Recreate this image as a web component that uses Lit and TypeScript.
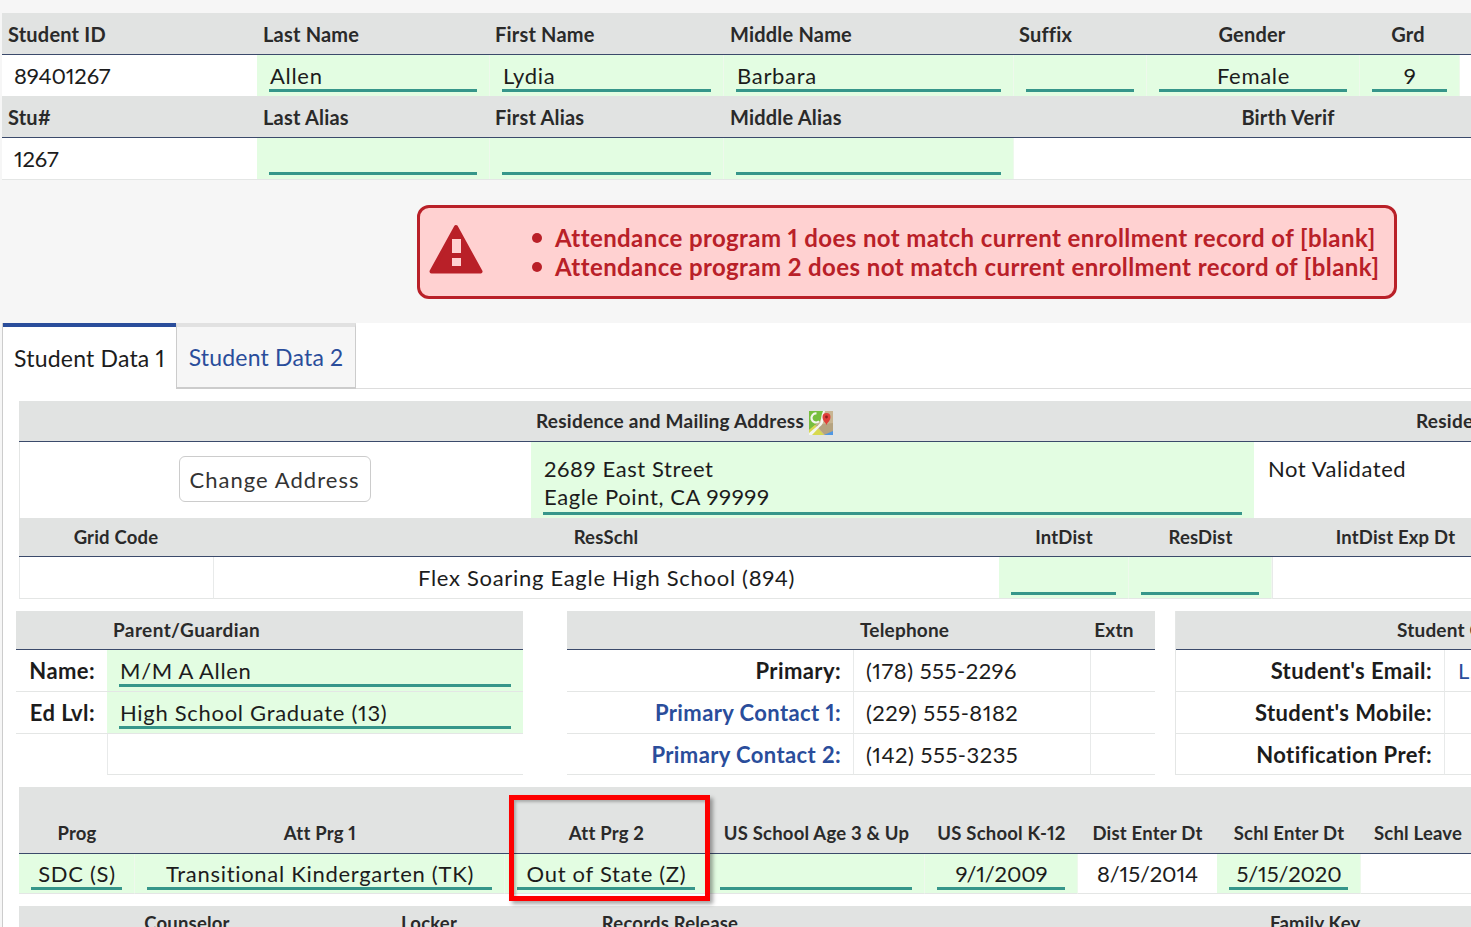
import { LitElement, html, css, svg } from "lit";
import { customElement } from "lit/decorators.js";

@customElement("app-root")
export class AppRoot extends LitElement {
  static styles = css`
    :host { display: block; }
    * { box-sizing: border-box; }
    .page { position: relative; width: 1471px; height: 927px; overflow: hidden; background: #f6f6f6; padding-top: 13px; font-family: Lato, "Noto Sans", sans-serif; font-variant-numeric: proportional-nums; color: #1c1c1c; display: flex; flex-direction: column; }

    .row { display: grid; }
    .top { margin-left: 2px; width: 1469px; background: #fff; }
    .top .row { grid-template-columns: 255px 233px 234px 290px 133px 213px 100px 11px; }
    .top .row.wide { grid-template-columns: 255px 233px 234px 290px 457px; }
    .top .row.head { grid-template-columns: 255px 232px 235px 289px 134px 210px 102px 12px; }
    .top .row.head2 { grid-template-columns: 255px 232px 235px 290px 457px; }

    .th { display: flex; align-items: center; background: #e1e3e2; border-bottom: 1px solid #3b4a6b; font-size: 20px; font-weight: 700; letter-spacing: .2px; color: #2a2a2a; white-space: nowrap; }
    .th.l { padding-left: 6px; }
    .th.c { justify-content: center; }
    .h42 { height: 42px; }
    .bv { padding-left: 91px; }

    .td { display: flex; align-items: center; font-size: 22px; letter-spacing: .7px; white-space: nowrap; background: #fff; }
    .td.pad { padding-left: 12px; letter-spacing: .5px; }
    .td.c { justify-content: center; }
    .td.num { letter-spacing: -.15px; }
    .green { background: #e3fde2; border-right: 1px solid #eef9ec; align-items: flex-end; padding: 0 12px 4px; }
    .field { width: 100%; border-bottom: 3px solid #36968a; height: 28px; line-height: 24px; padding-left: 1px; }
    .field.c { text-align: center; }
    .r41 { height: 41px; }
    .r42 { height: 42px; }
    .bb { border-bottom: 1px solid #e4e6e5; }
    .cell { display: grid; }

    .alert { margin: 25px 0 24px 417px; width: 980px; height: 94px; flex: none; display: flex; align-items: center; background: #ffd1d1; border: 3px solid #b92028; border-radius: 12px; color: #b92028; }
    .alert svg { width: 54px; height: 50px; margin: -6px 0 0 9px; flex: none; }
    .alert ul { margin: 0; padding: 0 0 0 67px; list-style: none; font-size: 24px; font-weight: 700; line-height: 29px; letter-spacing: .41px; white-space: nowrap; }
    .alert li { display: flex; align-items: center; }
    .dot { width: 10px; height: 10px; border-radius: 50%; background: #b92028; margin-right: 13px; margin-left: -18px; flex: none; }

    .panel { flex: 1; margin-left: 2px; background: #fff; border-left: 1px solid #ccc; min-height: 0; }
    .tabs { display: flex; height: 66px; border-bottom: 1px solid #ddd; font-size: 23px; letter-spacing: .2px; }
    .tab { display: flex; align-items: center; justify-content: center; white-space: nowrap; }
    .tab.on { width: 173px; border-top: 4px solid #2a4d9b; background: #fff; margin-bottom: -1px; }
    .tab.off { width: 180px; background: #f6f6f6; color: #2a4d9b; border-top: 4px solid #e1e1e1; border-left: 1px solid #ccc; border-right: 1px solid #ccc; border-bottom: 2px solid #ccc; height: 66px; }

    .wide-t { margin: 12px 0 0 16px; width: 1500px; }
    .addr-h { grid-template-columns: 1331px 169px; }
    .addr-h .th { font-size: 19px; height: 41px; letter-spacing: .25px; padding-bottom: 1px; }
    .addr-h .th:last-child { padding-left: 66px; }
    .map { width: 24px; height: 24px; margin: 4px 0 0 5px; flex: none; }
    .addr-d { grid-template-columns: 512px 723px 265px; height: 76px; }
    .addr-d > div { border-bottom: 1px solid #e4e6e5; }
    .btncell { display: flex; align-items: center; justify-content: center; padding: 0 2px 2px 0; border-left: 1px solid #e4e6e5; }
    .btn { width: 192px; height: 46px; border: 1px solid #ccc; border-radius: 6px; background: #fff; font: inherit; font-size: 22px; letter-spacing: 1.05px; color: #333; padding: 0; }
    .addr-g { background: #e3fde2; padding: 13px 12px 3px; font-size: 22px; letter-spacing: .6px; white-space: nowrap; }
    .addr-g .inner { border-bottom: 3px solid #36968a; line-height: 28px; height: 60px; padding-left: 1px; }
    .nv { font-size: 22px; letter-spacing: .55px; padding: 13px 0 0 14px; }

    .grid-h { grid-template-columns: 194px 786px 130px 143px 247px; }
    .grid-h .th { font-size: 18.5px; height: 39px; }
    .grid-d { grid-template-columns: 194px 786px 130px 143px 247px; }
    .grid-d .td { height: 42px; border-bottom: 1px solid #e4e6e5; border-left: 1px solid #e8eaea; }
    .grid-d .green { border-left: 0; padding: 0 12px 3px; }

    .trio { display: flex; margin: 12px 0 0 13px; width: 1500px; }
    .t1 { width: 507px; flex: none; }
    .t2 { width: 588px; flex: none; margin-left: 44px; }
    .t3 { width: 400px; flex: none; margin-left: 20px; border-left: 1px solid #e4e6e5; }
    .hd { display: flex; }
    .hd .th { height: 39px; font-size: 19px; width: 100%; padding-bottom: 1px; }
    .t1 .hd .th { padding-left: 97px; letter-spacing: .4px; }
    .t2 .hd .th { padding-left: 293px; }
    .t2 .hd .th span + span { margin-left: 145px; }
    .t3 .hd .th { padding-left: 221px; }
    .p-row { display: grid; height: 42px; }
    .p-row.short { height: 41px; }
    .t1 .p-row { grid-template-columns: 91px 416px; }
    .t2 .p-row { grid-template-columns: 286px 237px 65px; border-right: 1px solid #e4e6e5; }
    .t3 .p-row { grid-template-columns: 268px 132px; }
    .lbl { display: flex; align-items: center; justify-content: flex-end; padding-right: 12px; font-size: 22px; font-weight: 700; letter-spacing: .4px; white-space: nowrap; border-bottom: 1px solid #e4e6e5; }
    .lbl.blue { color: #2a4d9b; }
    .p-row .td { border-bottom: 1px solid #e4e6e5; border-left: 1px solid #e8eaea; height: auto; }
    .p-row .td.green { border-left: 0; border-right: 0; }
    .link { color: #2a4d9b; padding-left: 13px; }

    .bot { margin: 12px 0 0 16px; width: 1500px; }
    .bot-g { grid-template-columns: 116px 370px 203px 217px 153px 139px 144px 158px; }
    .bot-g .th { height: 67px; font-size: 18.5px; align-items: flex-end; padding-bottom: 9px; }
    .bot-g .td { height: 40px; border-bottom: 1px solid #e4e6e5; }
    .bot-g .green { padding: 0 12px 3px; }
    .plain { justify-content: center; }
    .sl { padding-left: 13px; }
    .low { margin: 12px 0 0 16px; width: 1500px; }
    .low-g { grid-template-columns: 336px 148px 334px 1000px; }
    .low-g .th { height: 39px; font-size: 18.5px; align-items: flex-start; padding-top: 6px; }
    .low-g .th:last-child { justify-content: flex-start; padding-left: 433px; }

    .mark { position: absolute; left: 509px; top: 795px; width: 201px; height: 106px; border: 5.5px solid #fe0000; box-shadow: 3px 3px 4px rgba(0,0,0,.35), inset 2px 2px 3px rgba(0,0,0,.25); pointer-events: none; }
  `;

  private field(t: string, c = false, num = false) {
    return html`<div class="td green ${num ? "num" : ""}"><div class="field ${c ? "c" : ""}">${t}</div></div>`;
  }

  private mapIcon() {
    return svg`<svg class="map" viewBox="0 0 24 24">
      <rect width="24" height="24" fill="#c8b592"/>
      <path d="M0 0h15L11 10 0 19z" fill="#76bf3f"/>
      <path d="M0 19l6-5 9 10H0z" fill="#d7d94f"/>
      <path d="M7 14l17-2v12h-8z" fill="#b5a380"/>
      <path d="M15 24l9-4v4z" fill="#4f97e4"/>
      <path d="M0 22L9 14.500q3-2.500 3-6 0-4 2-8.500h2q-1.500 4-1.500 8.500 0 4.500-4 7.500L3 24H0z" fill="#f4f6ef"/>
      <path d="M7.500 2.500a4.500 4.500 0 1 0 2.500 7.800" fill="none" stroke="#f4f6ef" stroke-width="2.200"/>
      <path d="M17.500 14c-1-3-4-4-4-8a4 4 0 0 1 8 0c0 4-3 5-4 8z" fill="#e0403a"/>
      <circle cx="17.500" cy="6" r="1.400" fill="#8e1f1c"/>
    </svg>`;
  }

  render() {
    return html`<div class="page">
      <section class="top">
        <div class="row head">
          <div class="th l h42">Student ID</div><div class="th l h42">Last Name</div><div class="th l h42">First Name</div><div class="th l h42">Middle Name</div><div class="th l h42">Suffix</div><div class="th c h42">Gender</div><div class="th c h42">Grd</div><div class="th h42"></div>
        </div>
        <div class="row">
          <div class="td pad num r41">89401267</div>
          <div class="r41 cell">${this.field("Allen")}</div>
          <div class="r41 cell">${this.field("Lydia")}</div>
          <div class="r41 cell">${this.field("Barbara")}</div>
          <div class="r41 cell">${this.field("")}</div>
          <div class="r41 cell">${this.field("Female", true)}</div>
          <div class="r41 cell">${this.field("9", true)}</div>
          <div class="td r41"></div>
        </div>
        <div class="row head2">
          <div class="th l h42">Stu#</div><div class="th l h42">Last Alias</div><div class="th l h42">First Alias</div><div class="th l h42">Middle Alias</div><div class="th c h42 bv">Birth Verif</div>
        </div>
        <div class="row wide">
          <div class="td pad num r42 bb">1267</div>
          <div class="r42 cell bb">${this.field("")}</div>
          <div class="r42 cell bb">${this.field("")}</div>
          <div class="r42 cell bb">${this.field("")}</div>
          <div class="td r42 bb"></div>
        </div>
      </section>

      <section class="alert">
        <svg viewBox="0 0 54 50">
          <path d="M27 3 L51.500 47.500 H2.500 Z" fill="#b92028" stroke="#b92028" stroke-width="4" stroke-linejoin="round"/>
          <rect x="23" y="15" width="9" height="14" fill="#ffd1d1"/>
          <rect x="23" y="34" width="9" height="8" fill="#ffd1d1"/>
        </svg>
        <ul>
          <li><span class="dot"></span>Attendance program 1 does not match current enrollment record of [blank]</li>
          <li><span class="dot"></span>Attendance program 2 does not match current enrollment record of [blank]</li>
        </ul>
      </section>

      <section class="panel">
        <nav class="tabs">
          <div class="tab on">Student Data 1</div>
          <div class="tab off">Student Data 2</div>
        </nav>

        <div class="wide-t">
          <div class="row addr-h">
            <div class="th c">Residence and Mailing Address ${this.mapIcon()}</div>
            <div class="th">Residence</div>
          </div>
          <div class="row addr-d">
            <div class="btncell"><button class="btn">Change Address</button></div>
            <div class="addr-g"><div class="inner">2689 East Street<br />Eagle Point, CA 99999</div></div>
            <div class="nv">Not Validated</div>
          </div>
          <div class="row grid-h">
            <div class="th c">Grid Code</div><div class="th c">ResSchl</div><div class="th c">IntDist</div><div class="th c">ResDist</div><div class="th c">IntDist Exp Dt</div>
          </div>
          <div class="row grid-d">
            <div class="td"></div>
            <div class="td c">Flex Soaring Eagle High School (894)</div>
            ${this.field("")}${this.field("")}
            <div class="td"></div>
          </div>
        </div>

        <div class="trio">
          <div class="t1">
            <div class="hd"><div class="th">Parent/Guardian</div></div>
            <div class="p-row"><div class="lbl">Name:</div>${this.field("M/M A Allen")}</div>
            <div class="p-row"><div class="lbl">Ed Lvl:</div>${this.field("High School Graduate (13)")}</div>
            <div class="p-row short"><div></div><div class="td"></div></div>
          </div>
          <div class="t2">
            <div class="hd"><div class="th"><span>Telephone</span><span>Extn</span></div></div>
            <div class="p-row"><div class="lbl">Primary:</div><div class="td pad">(178) 555-2296</div><div class="td"></div></div>
            <div class="p-row"><div class="lbl blue">Primary Contact 1:</div><div class="td pad">(229) 555-8182</div><div class="td"></div></div>
            <div class="p-row short"><div class="lbl blue">Primary Contact 2:</div><div class="td pad">(142) 555-3235</div><div class="td"></div></div>
          </div>
          <div class="t3">
            <div class="hd"><div class="th">Student Contact</div></div>
            <div class="p-row"><div class="lbl">Student's Email:</div><div class="td link">L.</div></div>
            <div class="p-row"><div class="lbl">Student's Mobile:</div><div class="td"></div></div>
            <div class="p-row short"><div class="lbl">Notification Pref:</div><div class="td"></div></div>
          </div>
        </div>

        <div class="bot">
          <div class="row bot-g">
            <div class="th c">Prog</div><div class="th c">Att Prg 1</div><div class="th c">Att Prg 2</div><div class="th c">US School Age 3 &amp; Up</div><div class="th c">US School K-12</div><div class="th c">Dist Enter Dt</div><div class="th c">Schl Enter Dt</div><div class="th sl">Schl Leave</div>
          </div>
          <div class="row bot-g">
            ${this.field("SDC (S)", true)}
            ${this.field("Transitional Kindergarten (TK)", true)}
            ${this.field("Out of State (Z)", true)}
            ${this.field("")}
            ${this.field("9/1/2009", true, true)}
            <div class="td plain num">8/15/2014</div>
            ${this.field("5/15/2020", true, true)}
            <div class="td"></div>
          </div>
        </div>

        <div class="low">
          <div class="row low-g">
            <div class="th c">Counselor</div><div class="th c">Locker</div><div class="th c">Records Release</div><div class="th">Family Key</div>
          </div>
        </div>
      </section>

      <div class="mark"></div>
    </div>`;
  }
}
